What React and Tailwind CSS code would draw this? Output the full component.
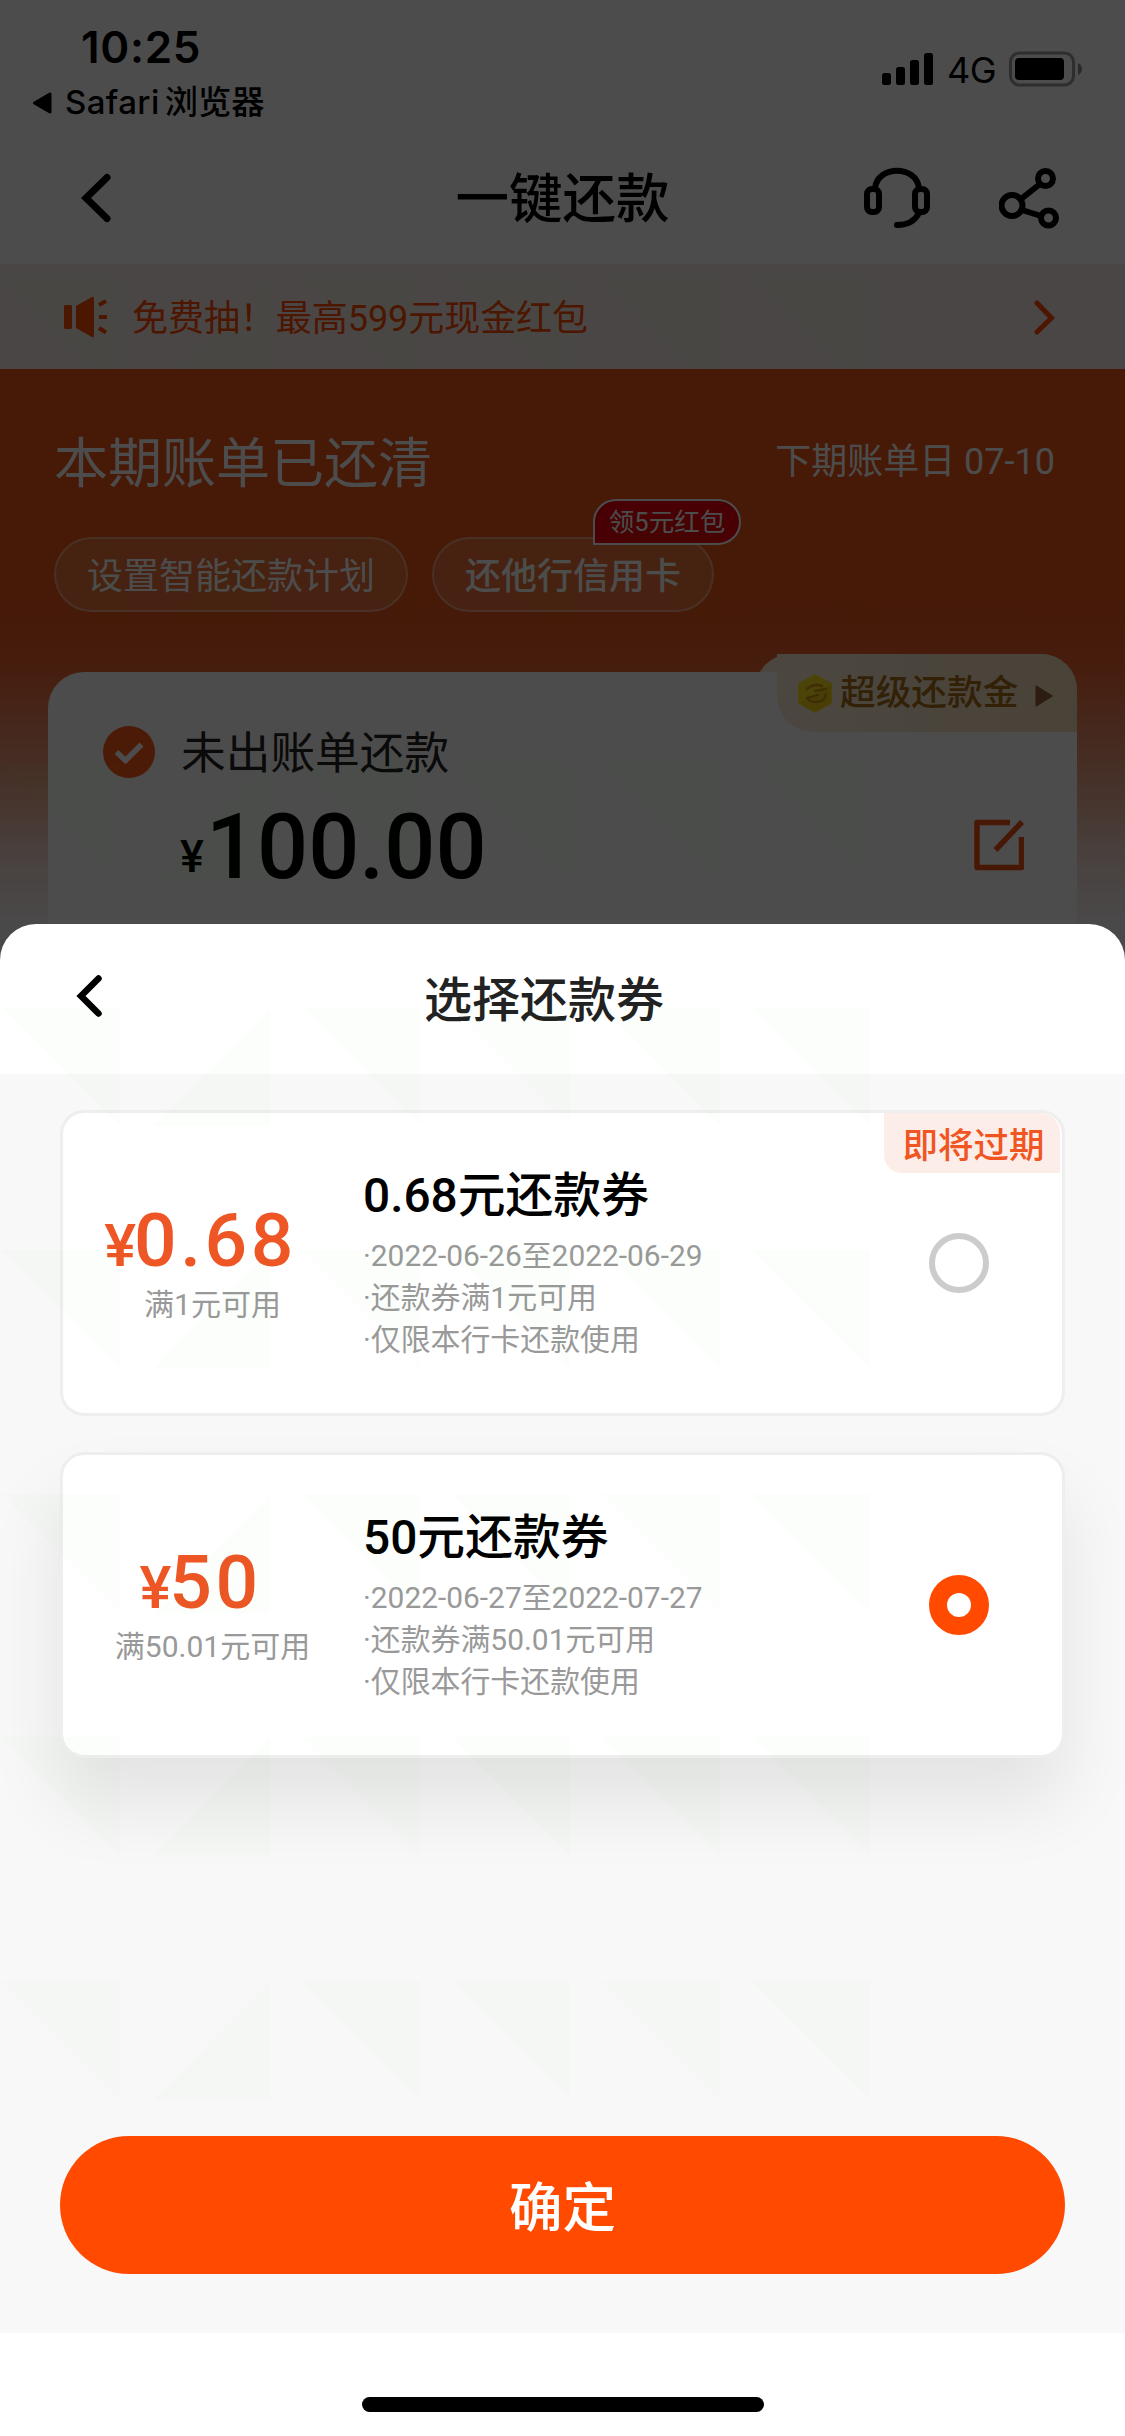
import React from "react";

const COUPONS = [
  {
    amount: "0.68",
    condition: "满1元可用",
    title: "0.68元还款券",
    lines: ["·2022-06-26至2022-06-29", "·还款券满1元可用", "·仅限本行卡还款使用"],
    tag: "即将过期",
    selected: false,
  },
  {
    amount: "50",
    condition: "满50.01元可用",
    title: "50元还款券",
    lines: ["·2022-06-27至2022-07-27", "·还款券满50.01元可用", "·仅限本行卡还款使用"],
    tag: null,
    selected: true,
  },
];

function StatusBar() {
  return (
    <div className="flex h-[132px] items-start justify-between font-['Inter','Noto_Sans_CJK_SC',sans-serif] text-black">
      <div className="flex flex-col pt-[20px]">
        <div className="h-[54px] pl-[81px] text-[44px] leading-[54px] font-semibold tracking-[0.7px]">10:25</div>
        <div className="flex h-[56px] items-center pt-[2px] pl-[32px]">
          <svg width="20" height="22" viewBox="0 0 20 22" className="shrink-0">
            <path d="M18 2 L2.5 11 L18 20 Z" fill="#000" stroke="#000" strokeWidth="3" strokeLinejoin="round" />
          </svg>
          <span className="ml-[13px] text-[33px] font-medium tracking-[0.4px]">Safari</span>
          <span className="ml-[5px] text-[33.300px] font-medium">浏览器</span>
        </div>
      </div>
      <div className="flex items-center pt-[51px] pr-[42px]">
        <svg width="52" height="34" viewBox="0 0 52 34" fill="#000">
          <rect x="0" y="21" width="9" height="12" rx="2.5" />
          <rect x="14" y="15" width="9" height="18" rx="2.5" />
          <rect x="28" y="8" width="9" height="25" rx="2.5" />
          <rect x="42" y="1" width="9" height="32" rx="2.5" />
        </svg>
        <span className="ml-[13px] w-[50px] pt-[2px] text-[36px] leading-[34px] tracking-[-0.5px]">4G</span>
        <svg className="ml-[12px]" width="74" height="36" viewBox="0 0 74 36">
          <rect x="1.5" y="2" width="63" height="32" rx="9" fill="none" stroke="#000" strokeOpacity="0.4" strokeWidth="3" />
          <rect x="6" y="7" width="49" height="22" rx="4" fill="#000" />
          <path d="M69 12 Q73 14 73 18 T69 24 Z" fill="#000" fillOpacity="0.45" />
        </svg>
      </div>
    </div>
  );
}

function NavBar() {
  return (
    <div className="grid h-[132px] grid-cols-3 items-center">
      <svg className="ml-[79px]" width="36" height="52" viewBox="0 0 36 52">
        <path d="M28 5.500 L7 26 L28 46.500" fill="none" stroke="#000" strokeWidth="7" strokeLinecap="round" strokeLinejoin="miter" />
      </svg>
      <h1 className="pt-[4px] text-center text-[53.500px] leading-[60px] font-medium text-black">一键还款</h1>
      <div className="flex items-center justify-end gap-[68px] pr-[66px]">
        <svg width="68" height="62" viewBox="0 0 68 62" fill="none" stroke="#000" strokeWidth="6" strokeLinecap="round">
          <rect x="4" y="22" width="12" height="23" rx="5" />
          <rect x="52" y="22" width="12" height="23" rx="5" />
          <path d="M12 21 C15 -2 53 -2 56 21" />
          <path d="M56 46 C52 54 44 58 34 58" />
        </svg>
        <svg width="60" height="62" viewBox="0 0 60 62" fill="none" stroke="#000" strokeWidth="6">
          <circle cx="13" cy="38.500" r="10.500" />
          <circle cx="46.500" cy="11.500" r="7.500" />
          <circle cx="49.500" cy="51" r="7.500" />
          <path d="M22 32 L41 17 M23 43 L42 49" />
        </svg>
      </div>
    </div>
  );
}

function NoticeBar() {
  return (
    <div className="flex h-[105px] items-center bg-[#f8eae8] pr-[69px] pl-[64px] text-[#ff4a05]">
      <svg width="44" height="42" viewBox="0 0 44 42" fill="currentColor">
        <rect x="0" y="9" width="8" height="24" rx="1.500" />
        <path d="M12 10 L28 1 Q30 0 30 3 V39 Q30 42 28 41 L12 32 Z" />
        <path d="M35 9 L42 5 M35 21 H43 M35 32 L42 36.500" stroke="currentColor" strokeWidth="4.200" />
      </svg>
      <span className="ml-[24px] pt-[4px] text-[36px] leading-[44px] tracking-[-0.05px]">免费抽！最高599元现金红包</span>
      <svg className="ml-auto" width="24" height="36" viewBox="0 0 24 36">
        <path d="M5 4 L19.500 19 L5 33" fill="none" stroke="currentColor" strokeWidth="5" strokeLinecap="round" />
      </svg>
    </div>
  );
}

function Coin() {
  return (
    <svg width="34" height="39" viewBox="0 0 34 39">
      <path d="M17 1 L33 10 V29 L17 38 L1 29 V10 Z" fill="#ffdf1e" stroke="#ffdf1e" strokeWidth="2" strokeLinejoin="round" />
      <path d="M17 20 L33 10 V29 L17 38 L1 29 Z" fill="#f2c414" fillOpacity="0.5" />
      <path d="M9 15 Q16 9 24 12 M17 17 L28 15 M28 20 Q27 28 18 28 Q12 28 9 24 M9 24 L20 21" fill="none" stroke="#d39c12" strokeWidth="2.500" strokeLinecap="round" />
    </svg>
  );
}

function BillHero() {
  return (
    <div className="h-[600px] bg-[linear-gradient(180deg,#ef5418_0px,#ed5519_220px,#ea5f2b_290px,#ecb096_430px,#f5e0da_500px,#f8f4f4_555px)]">
      <div className="flex items-start justify-between pt-[62px] pr-[70px] pl-[54px] text-white">
        <span className="pt-[4px] text-[54px] leading-[60px]">本期账单已还清</span>
        <span className="pt-[1px] text-[36px] leading-[60px]">下期账单日 07-10</span>
      </div>
      <div className="mt-[42px] flex gap-[24px] pl-[54px] text-[36px] text-white">
        <div className="flex h-[75px] w-[354px] items-center justify-center rounded-full border-2 border-white/35 bg-white/15 pt-[4px]">设置智能还款计划</div>
        <div className="relative flex h-[75px] w-[282px] items-center justify-center rounded-full border-2 border-white/35 bg-white/15 pt-[4px] font-medium">
          还他行信用卡
          <span className="absolute top-[-40px] left-[159px] flex h-[46px] w-[148px] items-center justify-center rounded-[23px] rounded-bl-none border-2 border-white bg-[#f00010] text-[25.500px] font-normal whitespace-nowrap">
            领5元红包
          </span>
        </div>
      </div>
      <div className="relative mx-[48px] mt-[60px] h-[300px]">
        <div className="absolute top-[-18px] right-0 h-[100px] w-[322px] rounded-t-[36px] bg-[#fbedd6]" />
        <div className="relative h-full rounded-t-[36px] bg-white">
          <div className="absolute top-[-18px] right-0 flex h-[78px] w-[300px] items-center rounded-tr-[36px] rounded-bl-[36px] bg-linear-to-r from-[#fbedd6] to-[#f6dfba] pl-[21px]">
            <Coin />
            <span className="ml-[8px] text-[35.700px] leading-[40px] font-medium text-[#a8701a]">超级还款金</span>
            <svg className="mt-[6px] ml-[17px]" width="18" height="22" viewBox="0 0 18 22">
              <path d="M1.500 1.500 L16.500 11 L1.500 20.500 Z" fill="#94603c" stroke="#94603c" strokeWidth="2" strokeLinejoin="round" />
            </svg>
          </div>
          <div className="flex items-center pt-[54px] pl-[55px]">
            <svg width="52" height="52" viewBox="0 0 52 52">
              <circle cx="26" cy="26" r="26" fill="#ff5a1a" />
              <path d="M13.500 26 L22.500 34.500 L38.500 18.500" fill="none" stroke="#fff" strokeWidth="5.500" />
            </svg>
            <span className="ml-[26px] h-[52px] pt-[2px] text-[44.700px] leading-[52px] text-[#222]">未出账单还款</span>
          </div>
          <div className="flex items-start justify-between pr-[53px] pl-[132px]">
            <div className="flex items-baseline pt-[4px] font-medium text-black">
              <span className="relative -top-[6px] text-[45px] leading-none">¥</span>
              <span className="ml-[2px] text-[90px] leading-[132px]">100.00</span>
            </div>
            <svg className="mt-[41px]" width="50" height="52" viewBox="0 0 50 52" fill="none" stroke="#f05014" strokeWidth="5.500">
              <path d="M36 3.500 H3 V48.500 H47.500 V18" strokeLinejoin="round" />
              <path d="M21.500 31 L48 3" />
            </svg>
          </div>
        </div>
      </div>
    </div>
  );
}

function Radio({ selected }) {
  return selected ? (
    <span className="h-[60px] w-[60px] rounded-full border-[18px] border-[#ff4a00] bg-white" />
  ) : (
    <span className="h-[60px] w-[60px] rounded-full border-[6px] border-[#cccccc] bg-white" />
  );
}

function CouponCard({ coupon }) {
  return (
    <div
      className={
        "relative flex h-[306px] items-center rounded-[24px] border-[3px] border-[#eeeeee] bg-white bg-clip-padding pr-[73px] " +
        (coupon.selected ? "shadow-[0_45px_75px_rgba(0,0,0,0.085)]" : "")
      }
    >
      <div className="flex w-[270px] flex-col items-center pl-px">
        <div className="flex items-baseline pt-px pl-[4px] font-medium text-[#ee5725]">
          <span className="text-[60px] leading-none">¥</span>
          <span className="-ml-[2px] text-[75px] leading-[76px] tracking-[3.500px]">{coupon.amount}</span>
        </div>
        <div className="mt-[7px] pl-[28px] text-[30px] leading-[40px] text-[#999999]">{coupon.condition}</div>
      </div>
      <div className="ml-[30px] flex flex-col whitespace-nowrap">
        <div className="text-[47.800px] leading-[60px] font-medium text-black">{coupon.title}</div>
        <div className="mt-[9px] text-[29.900px] leading-[42px] text-[#999999]">
          {coupon.lines.map((line) => (
            <div key={line}>{line}</div>
          ))}
        </div>
      </div>
      <div className="ml-auto flex">
        <Radio selected={coupon.selected} />
      </div>
      {coupon.tag && (
        <div className="absolute top-0 right-[2px] flex h-[60px] w-[176px] items-center justify-center rounded-tr-[20px] rounded-bl-[18px] bg-[#fcede9] pt-[6px] pl-[3px] text-[35.500px] leading-[40px] font-medium text-[#f05522]">
          {coupon.tag}
        </div>
      )}
    </div>
  );
}

function CouponSheet() {
  return (
    <div className="absolute top-[924px] left-0 flex h-[1512px] w-full flex-col overflow-hidden rounded-t-[36px] bg-white">
      <div className="flex h-[150px] items-center">
        <svg className="-mt-[6px] ml-[72px]" width="34" height="48" viewBox="0 0 34 48">
          <path d="M26.500 6.500 L9 24 L26.500 41.500" fill="none" stroke="#000" strokeWidth="6.500" strokeLinecap="round" />
        </svg>
        <h2 className="ml-[318px] pt-[3px] text-[48px] leading-[60px] font-medium text-[#222]">选择还款券</h2>
      </div>
      <div className="flex h-[1259px] flex-col bg-[#f8f8f8] px-[60px] pt-[36px] pb-[59px]">
        <div className="flex flex-col gap-[36px]">
          {COUPONS.map((coupon) => (
            <CouponCard key={coupon.title} coupon={coupon} />
          ))}
        </div>
        <button className="mt-auto h-[138px] rounded-full bg-[#ff4a00] pt-[8px] text-[53.500px] font-medium text-white">确定</button>
      </div>
      <div className="flex flex-1 items-end justify-center pb-[24px]">
        <div className="h-[15px] w-[402px] rounded-full bg-black" />
      </div>
    </div>
  );
}

/* Barely visible triangle security texture laid over the screen. */
function Texture() {
  const rows = [276, 520, 763, 1007, 1250, 1494, 1737, 1981];
  const cols = [1, 151, 301, 451, 601, 751];
  return (
    <svg className="pointer-events-none absolute inset-0" width="1125" height="2436" viewBox="0 0 1125 2436" fill="#20b000" fillOpacity="0.01">
      {rows.map((y) =>
        cols.map((x, i) => (
          <path
            key={`${x}-${y}`}
            d={i === 1 ? `M${x + 119} ${y} v119 h-117 Z` : `M${x} ${y} h119 v119 Z`}
          />
        ))
      )}
    </svg>
  );
}

export default function App() {
  return (
    <div className="relative h-[2436px] w-[1125px] overflow-hidden bg-white font-['Roboto','Noto_Sans_CJK_SC',sans-serif] whitespace-nowrap">
      <StatusBar />
      <NavBar />
      <NoticeBar />
      <BillHero />
      <div className="absolute inset-0 bg-black/70" />
      <CouponSheet />
      <Texture />
    </div>
  );
}
